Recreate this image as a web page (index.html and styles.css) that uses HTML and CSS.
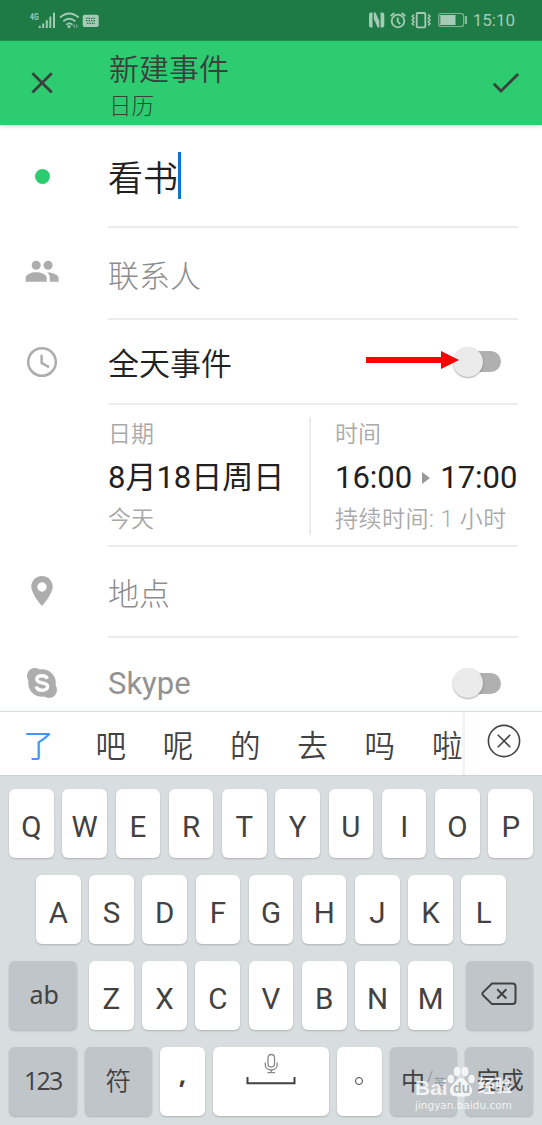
FILE: index.html
```html
<!DOCTYPE html>
<html lang="zh-CN">
<head>
    <meta charset="UTF-8">
    <meta name="viewport" content="width=device-width, initial-scale=1.0">
    <title>新建事件</title>
    <link rel="stylesheet" href="styles.css">
</head>
<body>
    <div class="status-bar">
        <svg class="status-left" width="72" height="20" viewBox="0 0 72 20">
            <text x="1" y="9.5" class="net" textLength="8.5" lengthAdjust="spacingAndGlyphs">4G</text>
            <path d="M9.8 15.7h2v2.300h-2zM13.200 13.500h2v4.500h-2zM16.800 10.300h2V18h-2zM20.300 6.500h2V18h-2zM24 2.800h2V18h-2z"/>
            <g class="line"><path d="M31 7.500q9.300-8 18.600 0M34.200 11.400q6.100-5.400 12.200 0M37.300 14.700q3.100-2.600 6.200 0"/></g>
            <circle cx="40" cy="16.400" r="1.500"/>
            <path d="M46 13.800v4.600l-2.500-2.300zM46.900 13.800v4.600l2.500-2.300z" opacity=".5"/>
            <rect x="53.700" y="4.700" width="16" height="12.300" rx="2"/>
            <path class="holes" d="M57 8.300h10M57 10.600h10M58 13.400h8"/>
        </svg>
        <div class="status-right">
            <svg width="101" height="20" viewBox="0 0 101 20">
                <path d="M4 2.500h1.500v15H4Q2 17.500 2 15.500v-11q0-2 2-2zM15.300 2.500h-1.700v15h1.700q2 0 2-2v-11q0-2-2-2zM6.800 2.500h1.700l3.800 8.500v6.500h-1.600L6.800 9z"/>
                <g class="line">
                    <circle cx="31" cy="11" r="6.300"/>
                    <path d="M30.700 7.400v4l2.400 2.700M23.700 6l3.600-3M34.700 3l3.600 3"/>
                    <rect x="49.700" y="3" width="8.600" height="14.300" rx="1"/>
                    <path d="M47 4.500l-1.800 1.800L47 8.200l-1.800 1.800L47 11.900l-1.800 1.800L47 15.500M61.200 4.500L63 6.300l-1.800 1.900L63 10l-1.800 1.900 1.800 1.800-1.800 1.800" stroke-width="1.500"/>
                    <rect x="71.700" y="3.500" width="25" height="13" rx="2.500" stroke-width="1.200" opacity=".75"/>
                </g>
                <path d="M73.300 5.100h15.200v9.800H73.300zM98.200 6h1.600v8h-1.600z"/>
            </svg>
            <span class="clock">15:10</span>
        </div>
    </div>

    <header class="app-bar">
        <svg class="close" width="84" height="84" viewBox="0 0 84 84"><path d="M32.400 32.200l19.400 19.400M51.800 32.200L32.400 51.600"/></svg>
        <div class="app-title">
            <h1>新建事件</h1>
            <p>日历</p>
        </div>
        <svg class="done" width="36" height="84" viewBox="0 0 36 84"><path d="M1.800 42.700l7.200 7.300 17.200-17"/></svg>
    </header>

    <main class="form">
        <div class="row title-row">
            <div class="icon"><span class="dot"></span></div>
            <div class="field"><span class="title-text">看书</span><span class="caret"></span></div>
        </div>
        <div class="row contact-row">
            <div class="icon">
                <svg width="36" height="36" viewBox="0 0 36 36"><circle cx="12.200" cy="11.200" r="4.500"/><circle cx="24.100" cy="11.200" r="4.500"/><path d="M1.600 27.700v-3.800c0-3.600 6.300-5.600 10.600-5.600s10.500 2 10.500 5.600v3.800zM23 18.400c5 0 11.600 2 11.600 5.500v3.800h-8.800v-3.800c0-2.600-1-4.200-2.800-5.500z"/></svg>
            </div>
            <div class="field hint">联系人</div>
        </div>
        <div class="row allday-row">
            <div class="icon">
                <svg width="34" height="34" viewBox="0 0 34 34"><path class="clock-line" d="M17 3.200a13.800 13.800 0 1 1 0 27.600 13.800 13.800 0 0 1 0-27.600M16.600 9.700v8.200l7.400 4.200"/></svg>
            </div>
            <div class="field">
                <span>全天事件</span>
                <div class="switch">
                    <svg class="arrow" width="93" height="18" viewBox="0 0 93 18"><path d="M0 6h75V0l18 9-18 9v-6H0z"/></svg>
                </div>
            </div>
        </div>
        <div class="row date-row">
            <div class="icon"></div>
            <div class="field">
                <div class="date">
                    <small>日期</small>
                    <strong>8月18日周日</strong>
                    <small>今天</small>
                </div>
                <div class="time">
                    <small>时间</small>
                    <strong>16:00<i class="play"></i>17:00</strong>
                    <small class="duration">持续时间: 1 小时</small>
                </div>
            </div>
        </div>
        <div class="row place-row">
            <div class="icon">
                <svg width="24" height="32" viewBox="0 0 24 32"><path fill-rule="evenodd" d="M12 1C6 1 1.300 5.700 1.300 11.600 1.300 19.500 12 31 12 31s10.700-11.500 10.700-19.400C22.700 5.700 18 1 12 1zm0 6.300a4.700 4.700 0 1 1 0 9.400 4.700 4.700 0 0 1 0-9.400z"/></svg>
            </div>
            <div class="field hint">地点</div>
        </div>
        <div class="row skype-row">
            <div class="icon">
                <svg width="32" height="32" viewBox="0 0 32 32"><circle cx="16" cy="16" r="13.800"/><circle cx="9" cy="9" r="8"/><circle cx="23" cy="23" r="8"/><path class="skype-s" d="M21.300 11.800c-.9-2.300-3-3-5.300-3-3.200 0-5.200 1.400-5.200 3.500 0 5 10.800 2.200 10.800 7.100 0 2.400-2.400 3.800-5.500 3.800-3 0-5.300-1.200-5.900-3.700"/></svg>
            </div>
            <div class="field hint"><span>Skype</span><div class="switch"></div></div>
        </div>
    </main>

    <div class="candidates">
        <div class="words">
            <span class="active">了</span><span>吧</span><span>呢</span><span>的</span><span>去</span><span>吗</span><span>啦</span>
        </div>
        <div class="clear">
            <svg width="34" height="34" viewBox="0 0 34 34"><circle cx="17" cy="17" r="15.600"/><path d="M10.800 10.800l12.400 12.400M23.200 10.800L10.800 23.200"/></svg>
        </div>
    </div>

    <div class="keyboard">
        <div class="keys">
            <b>Q</b><b>W</b><b>E</b><b>R</b><b>T</b><b>Y</b><b>U</b><b>I</b><b>O</b><b>P</b>
        </div>
        <div class="keys keys-mid">
            <b>A</b><b>S</b><b>D</b><b>F</b><b>G</b><b>H</b><b>J</b><b>K</b><b>L</b>
        </div>
        <div class="keys">
            <b class="fn ab">ab</b>
            <div class="letters"><b>Z</b><b>X</b><b>C</b><b>V</b><b>B</b><b>N</b><b>M</b></div>
            <b class="fn back">
                <svg width="36" height="24" viewBox="0 0 36 24"><path d="M11 1.500h20.500a3 3 0 0 1 3 3v14.600a3 3 0 0 1-3 3H11L2 13.300q-1.200-1.500 0-3zM16.200 7.300l9.200 9.200M25.400 7.300l-9.200 9.200"/></svg>
            </b>
        </div>
        <div class="keys">
            <b class="fn num">123</b>
            <b class="fn sym">符</b>
            <b class="comma">,</b>
            <b class="space">
                <svg width="52" height="38" viewBox="0 0 52 38"><g class="mic"><rect x="23" y="1.500" width="6.500" height="12.500" rx="3.200"/><path d="M20.300 9.500v2.500c0 3 2.500 5 5.900 5s5.900-2 5.900-5V9.500M26.200 17v2.700M22.500 19.700h7.500"/></g><path d="M2.500 24v6.300h47V24"/></svg>
            </b>
            <b class="period"><i></i></b>
            <b class="fn lang">中<em>/</em><small>英</small></b>
            <b class="fn finish">完成</b>
        </div>
    </div>

    <div class="watermark">
        <div class="brand">
            <span class="bai">Bai</span>
            <span class="paw">
                <svg width="28" height="32" viewBox="0 0 28 32"><ellipse cx="3.800" cy="13" rx="3.200" ry="4.200"/><ellipse cx="10" cy="5.500" rx="3.300" ry="4.700"/><ellipse cx="18.200" cy="5.500" rx="3.300" ry="4.700"/><ellipse cx="24.500" cy="13" rx="3.200" ry="4.200"/><path d="M14 12c4 0 5 4 8 6.500 3 2.500 4 5.500 2.500 9-1.500 3-5 3-10.500 3s-9 0-10.500-3c-1.500-3.500-.5-6.500 2.500-9C9 16 10 12 14 12z"/></svg>
                <span class="du">du</span>
            </span>
            <span class="jy">经验</span>
        </div>
        <div class="url">jingyan.baidu.com</div>
    </div>
</body>
</html>
```
FILE: styles.css
```css
* {margin:0;padding:0;box-sizing:border-box;}
body {width:542px;height:1125px;overflow:hidden;position:relative;background:#fff;color:#212121;font-family:Roboto,"Noto Sans CJK SC",sans-serif;display:flex;flex-direction:column;}
svg {display:block;flex:none;}
b, strong, h1 {font-weight:400;}
i, em {font-style:normal;}

.status-bar {height:41px;flex:none;background:#1e7b46;color:#a5cab5;display:flex;justify-content:space-between;align-items:center;padding:0 27px 0 29px;border-bottom:1px solid #239653;}
.status-bar svg {fill:#a5cab5;}
.status-bar .line {fill:none;stroke:#a5cab5;stroke-width:1.8;}
.status-bar .holes {stroke:#1e7b46;stroke-width:1.2;stroke-dasharray:1.5 1;}
.net {font:700 9.5px Roboto,sans-serif;}
.status-right {display:flex;align-items:center;gap:5px;}
.clock {font-size:17px;line-height:20px;}

.app-bar {height:84px;flex:none;background:#2ecc71;color:#3b403d;display:flex;box-shadow:0 1px 4px rgba(0,0,0,.2);position:relative;}
.app-bar svg {fill:none;stroke:#3b403d;stroke-width:2.8;}
.app-title {flex:1;padding:10px 0 0 25px;}
.app-title h1 {font-size:30px;line-height:38px;font-weight:350;}
.app-title p {font-size:22.5px;line-height:34px;font-weight:300;}
.done {margin-right:14px;}

.form {height:586px;flex:none;overflow:hidden;}
.row {display:flex;padding-right:24px;}
.icon {width:84px;margin-right:24px;flex:none;display:flex;align-items:center;justify-content:center;}
.icon svg {fill:#adadad;}
.field {flex:1;display:flex;align-items:center;border-bottom:2px solid #ececec;font-size:31px;font-weight:350;}
.hint {color:#8c8c8c;font-weight:300;}
.title-row {height:103px;}
.title-row .field {font-size:35px;}
.dot {width:15px;height:15px;border-radius:50%;background:#2ecc71;}
.caret {width:3px;height:47px;background:#0b75c9;}
.contact-row {height:92px;}
.contact-row .icon {padding-bottom:5px;}
.allday-row {height:85px;}
.allday-row .icon {padding-bottom:2px;}
.icon .clock-line {fill:none;stroke:#adadad;stroke-width:2.5;}
.switch {width:48px;height:32px;margin:0 17px 0 auto;display:flex;align-items:center;position:relative;}
.switch::before {content:"";width:36px;height:21px;margin-left:12px;border-radius:11px;background:#b0b0b0;}
.switch::after {content:"";position:absolute;left:0;top:1px;width:30px;height:30px;border-radius:50%;background:#ebebeb;box-shadow:0 1px 2px rgba(0,0,0,.35);}
.arrow {position:absolute;right:42px;top:5px;fill:#f00;z-index:1;}
.date-row {height:142px;}
.date-row .field {align-items:flex-start;padding-top:12px;}
.date, .time {height:118px;display:flex;flex-direction:column;}
.date {width:203px;border-right:2px solid #ececec;}
.time {padding-left:24px;white-space:nowrap;}
.date-row small {font-size:23px;line-height:36px;color:#a9a9a9;}
.date-row strong {font-size:31px;line-height:49px;display:flex;align-items:center;}
.date-row .duration {letter-spacing:.5px;}
.play {border-left:8px solid #999;border-top:6px solid transparent;border-bottom:6px solid transparent;margin:0 10px;}
.place-row {height:91px;}
.place-row .icon {padding-bottom:3px;}
.skype-row {height:92px;}
.skype-row .icon {padding-bottom:2px;}
.skype-row .field {font-weight:400;color:#929292;}
.icon .skype-s {fill:none;stroke:#fff;stroke-width:3.4;}

.candidates {height:65px;flex:none;display:flex;background:#fff;border-top:1px solid #d6dbdc;border-bottom:1px solid #ccd2d4;}
.words {width:465px;overflow:hidden;display:flex;border-right:3px solid #f1f5f6;color:#424242;font-size:30.5px;font-weight:350;line-height:69px;}
.words span {width:67.3px;flex:none;text-align:center;}
.words .active {width:77px;color:#4495f5;}
.clear {flex:1;padding:12px 0 0 22px;}
.clear svg {fill:none;stroke:#444;stroke-width:1.6;}

.keyboard {flex:1;background:#d8dddf;padding:13px 9px 0;display:flex;flex-direction:column;gap:17px;}
.keys, .letters {display:flex;justify-content:space-between;}
.keys b {width:44.6px;height:69px;border-radius:6px;background:#fff;box-shadow:0 1px 2px rgba(0,0,0,.2);display:flex;align-items:center;justify-content:center;padding-top:6px;font-size:29.5px;color:#424242;}
.keys-mid {padding:0 27px;}
.letters {width:364px;}
.keys .fn {width:67.5px;background:#c0c5c9;padding-top:0;}
.keys .ab {font:25px "Noto Sans",sans-serif;padding:0 0 3px 3px;}
.keys .back {padding-bottom:3px;}
.keys .num {font:25px "Open Sans","Noto Sans",sans-serif;letter-spacing:-1.8px;padding-bottom:4px;}
.keys .sym {font-size:25.5px;font-weight:350;padding-bottom:6px;}
.keys .comma {font:700 26px "Noto Sans",sans-serif;padding-bottom:22px;}
.keys .space {width:116px;align-items:flex-start;}
.keys svg {fill:none;stroke:#424242;stroke-width:2;}
.keys .mic {stroke:#888;stroke-width:1.3;}
.period i {width:8px;height:8px;border:1.5px solid #424242;border-radius:50%;margin-bottom:8px;}
.keys .lang {font-size:24px;padding-bottom:5px;}
.lang em {font-size:21px;color:#92979a;font-weight:300;}
.lang small {font-size:13px;color:#92979a;padding-top:7px;}
.keys .finish {font-size:23.5px;padding:0 0 5px 2px;}

/* translucent logo over the bottom keys */
.watermark {position:absolute;left:415px;top:1065px;width:100px;color:rgba(255,255,255,.8);}
.brand {display:flex;height:33px;align-items:flex-end;}
.bai {width:32px;font:700 21px/21px "Liberation Sans",sans-serif;}
.paw {width:28px;height:32px;position:relative;margin-right:3px;}
.paw svg {fill:rgba(255,255,255,.8);}
.du {position:absolute;left:6px;top:14px;font:700 14px/16px "Liberation Sans",sans-serif;color:#afb5b9;}
.jy {font-size:17px;line-height:23px;font-weight:700;}
.url {font:10.5px/15px "DejaVu Sans",sans-serif;}
```
